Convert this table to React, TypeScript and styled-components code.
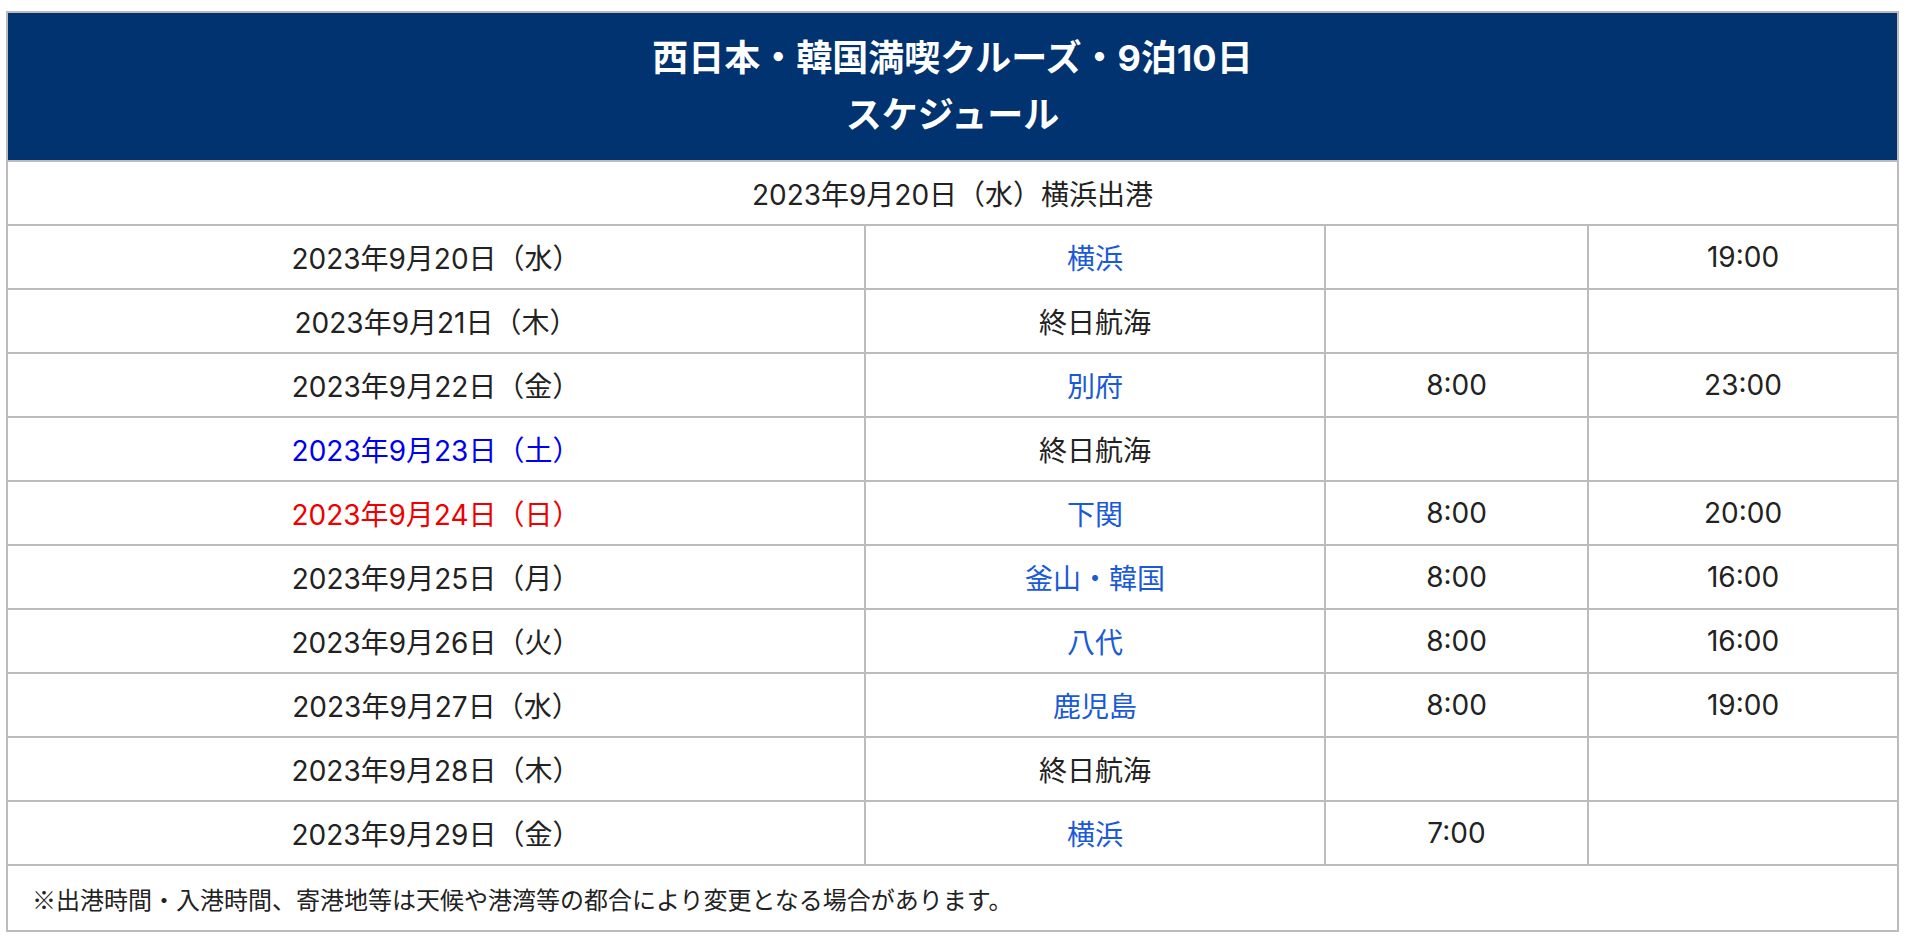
import React from "react";
import styled, { createGlobalStyle } from "styled-components";

const GlobalStyle = createGlobalStyle`
  body {
    margin: 0;
    background: #fff;
    font-family: Inter, "Noto Sans CJK JP", sans-serif;
    color: #222;
  }
`;

const Schedule = styled.div`
  margin: 11px 0 0 6px;
  width: 1893px;
  box-sizing: border-box;
  border-left: 2px solid #bcbcbc;
  border-top: 2px solid #bcbcbc;
`;

const Header = styled.div`
  height: 149px;
  box-sizing: border-box;
  background: #00336f;
  border-right: 2px solid #bcbcbc;
  border-bottom: 2px solid #bcbcbc;
  display: flex;
  flex-direction: column;
  align-items: center;
  justify-content: center;
  color: #fff;
  font-weight: 700;
  font-size: 36px;
  line-height: 57px;
`;

const FullRow = styled.div<{ $align?: "left" | "center"; $h: number; $size: number }>`
  height: ${(p) => p.$h}px;
  box-sizing: border-box;
  border-right: 2px solid #bcbcbc;
  border-bottom: 2px solid #bcbcbc;
  display: flex;
  align-items: center;
  justify-content: ${(p) => (p.$align === "left" ? "flex-start" : "center")};
  padding: 0 ${(p) => (p.$align === "left" ? "24px" : "0")};
  font-size: ${(p) => p.$size}px;
`;

const Note = styled(FullRow)`
  font-family: "Noto Sans CJK JP", sans-serif;
`;

const Row = styled.div`
  display: grid;
  grid-template-columns: 858px 460px 263px 310px;
  height: 64px;
`;

const Cell = styled.div<{ $tone?: "sat" | "sun" }>`
  box-sizing: border-box;
  border-right: 2px solid #bcbcbc;
  border-bottom: 2px solid #bcbcbc;
  display: flex;
  align-items: center;
  justify-content: center;
  font-size: 28px;
  color: ${(p) => (p.$tone === "sat" ? "#0000f0" : p.$tone === "sun" ? "#ee0000" : "#222")};
`;

const PortLink = styled.a`
  color: #1a5ad7;
  text-decoration: none;
`;

type Stop = {
  date: string;
  tone?: "sat" | "sun";
  port: string;
  link?: boolean;
  arrive?: string;
  depart?: string;
};

const stops: Stop[] = [
  { date: "2023年9月20日（水）", port: "横浜", link: true, depart: "19:00" },
  { date: "2023年9月21日（木）", port: "終日航海" },
  { date: "2023年9月22日（金）", port: "別府", link: true, arrive: "8:00", depart: "23:00" },
  { date: "2023年9月23日（土）", tone: "sat", port: "終日航海" },
  { date: "2023年9月24日（日）", tone: "sun", port: "下関", link: true, arrive: "8:00", depart: "20:00" },
  { date: "2023年9月25日（月）", port: "釜山・韓国", link: true, arrive: "8:00", depart: "16:00" },
  { date: "2023年9月26日（火）", port: "八代", link: true, arrive: "8:00", depart: "16:00" },
  { date: "2023年9月27日（水）", port: "鹿児島", link: true, arrive: "8:00", depart: "19:00" },
  { date: "2023年9月28日（木）", port: "終日航海" },
  { date: "2023年9月29日（金）", port: "横浜", link: true, arrive: "7:00" },
];

export default function App() {
  return (
    <>
      <GlobalStyle />
      <Schedule>
        <Header>
          <div>西日本・韓国満喫クルーズ・9泊10日</div>
          <div>スケジュール</div>
        </Header>
        <FullRow $h={64} $size={28}>
          2023年9月20日（水）横浜出港
        </FullRow>
        {stops.map((s, i) => (
          <Row key={i}>
            <Cell $tone={s.tone}>{s.date}</Cell>
            <Cell>{s.link ? <PortLink href="#">{s.port}</PortLink> : s.port}</Cell>
            <Cell>{s.arrive}</Cell>
            <Cell>{s.depart}</Cell>
          </Row>
        ))}
        <Note $align="left" $h={66} $size={24}>
          ※出港時間・入港時間、寄港地等は天候や港湾等の都合により変更となる場合があります。
        </Note>
      </Schedule>
    </>
  );
}
